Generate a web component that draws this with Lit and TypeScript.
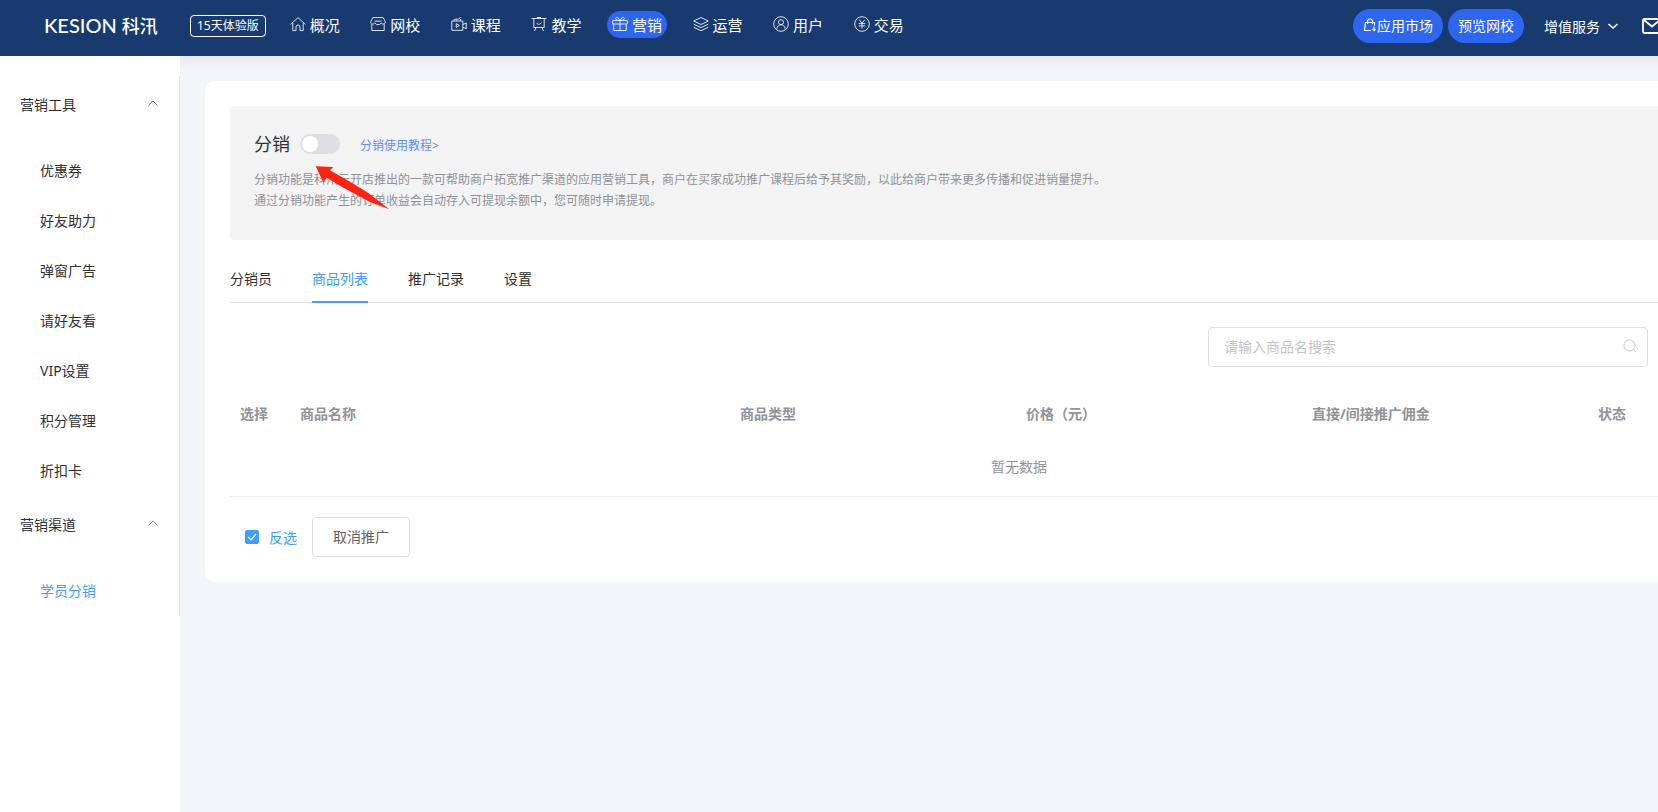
import { LitElement, html, css, svg } from "lit";
import { customElement, state } from "lit/decorators.js";

const icons: Record<string, unknown> = {
  home: svg`<path d="M.6 8.400 8 1.600l7.400 6.800M2.800 7v7.600h3.200V11a2 2 0 0 1 4 0v3.600h3.200V7"/>`,
  shop: svg`<path d="M2.800 1.600h10.400l2 4v1.500c-1.200 1.300-3 1.300-4 0L9.500 8.500h-3L5 7.100H4.600c-1 1.300-2.800 1.300-3.800 0V5.600zM1.800 8.200v6.300h12.400V8.200M4.500 5.100h7"/>`,
  course: svg`<path d="M.8 5h11v9.300H.8zM11.800 8.500 15.300 7v5.700l-3.500-1.500M3.200 5V3M6 4.800 4.500 3.200h3L9.500 1.200M9.500 4.800V3"/><path d="M5.200 7.600v3.800l3.200-1.900z"/>`,
  teach: svg`<path d="M.5 2.500h15M2.800 2.500v9h10.400v-9M5 11.500 3.500 15M11 11.500l1.500 3.500M6 1.500h4M5.400 7c1.500 2 3.500 1.500 5-.5"/>`,
  gift: svg`<path d="M.7 4.500h14.600V8H.7zM1.700 8v6.500h12.600V8M8 4.500v10M8 4.500C6.500 1 3.500.8 3.600 2.700 3.700 4.200 6 4.500 8 4.500c2 0 4.300-.3 4.400-1.800C12.500.8 9.500 1 8 4.500z"/>`,
  layers: svg`<path d="M8 1.500 15.300 5 8 8.500.7 5zM.7 8.200 8 11.600l7.300-3.400M.7 11.300 8 14.700l7.300-3.400"/>`,
  user: svg`<circle cx="8" cy="8" r="7.300"/><circle cx="8" cy="6.200" r="2.500"/><path d="M3.800 12.700c.5-5.200 7.900-5.200 8.400 0"/>`,
  yen: svg`<circle cx="8" cy="8" r="7.300"/><path d="M5.200 3.800 8 7.200l2.800-3.400M8 7.200v5.300M4.800 7.600h6.400M4.800 9.900h6.400"/>`,
};

const navItems = [
  ["home", "概况"],
  ["shop", "网校"],
  ["course", "课程"],
  ["teach", "教学"],
  ["gift", "营销"],
  ["layers", "运营"],
  ["user", "用户"],
  ["yen", "交易"],
];

const groups = [
  {
    title: "营销工具",
    items: ["优惠券", "好友助力", "弹窗广告", "请好友看", "VIP设置", "积分管理", "折扣卡"],
  },
  { title: "营销渠道", items: ["学员分销"] },
];

const tabs = ["分销员", "商品列表", "推广记录", "设置"];

const base = css`
  * {
    box-sizing: border-box;
  }
  a {
    color: inherit;
    text-decoration: none;
  }
  button {
    font: inherit;
    color: inherit;
    margin: 0;
    cursor: pointer;
  }
  svg {
    display: block;
    flex: none;
    fill: none;
    stroke: currentColor;
  }
`;

@customElement("top-bar")
export class TopBar extends LitElement {
  static styles = [
    base,
    css`
      :host {
        display: flex;
        align-items: center;
        height: 56px;
        padding: 0 25px 0 44px;
        background: #183a6f;
        color: #fff;
        box-shadow: 0 2px 16px rgba(0, 0, 0, 0.08);
      }
      .logo {
        display: flex;
        align-items: center;
        gap: 5px;
        width: 146px;
        height: 48px;
        margin-bottom: 7px;
        font: 500 20px/48px Lato, sans-serif;
      }
      .logo-cn {
        font: 500 18px/48px "Noto Sans CJK SC", sans-serif;
      }
      .badge {
        height: 22px;
        padding: 0 6px;
        border: 1px solid #fff;
        border-radius: 4px;
        font-size: 12px;
        line-height: 20px;
        margin: 0 19px 4px 0;
      }
      nav {
        display: flex;
        justify-content: space-between;
        width: 624px;
        margin-bottom: 8px;
      }
      .item {
        display: flex;
        align-items: center;
        gap: 4px;
        height: 27px;
        padding: 0 5px;
        border-radius: 14px;
        font-size: 15px;
      }
      .item svg {
        opacity: 0.85;
      }
      .item.active,
      .pill {
        background: #2e66ef;
      }
      .tools {
        display: flex;
        align-items: center;
        gap: 5px;
        margin: 0 0 4px auto;
        font-size: 14px;
      }
      .pill {
        display: flex;
        align-items: center;
        height: 34px;
        padding: 0 10px 2px;
        border: 0;
        border-radius: 17px;
      }
      .service {
        display: flex;
        align-items: center;
        gap: 6px;
        padding: 0 17px 0 15px;
        border: 0;
        background: none;
      }
      .mail {
        padding: 0;
        border: 0;
        background: none;
      }
      .tail {
        width: 166px;
      }
    `,
  ];

  render() {
    return html`
      <a class="logo" href="#"><span>KESION</span><span class="logo-cn">科汛</span></a>
      <span class="badge">15天体验版</span>
      <nav>
        ${navItems.map(
          ([icon, label]) => html`<a class="item ${icon === "gift" ? "active" : ""}" href="#">
            <svg width="16" height="16" viewBox="0 0 16 16">${icons[icon]}</svg>${label}
          </a>`
        )}
      </nav>
      <div class="tools">
        <button class="pill">
          <svg width="14" height="14" viewBox="0 0 14 14" stroke-width="1.2">
            <path d="M11.500 7.500V4.500H2.500L1.500 12.500H8M4.500 6V3.500a2.500 2.500 0 0 1 5 0V6M11 8.500v4M9.500 11l1.500 1.700 1.500-1.700" />
          </svg>应用市场
        </button>
        <button class="pill">预览网校</button>
        <button class="service">
          增值服务
          <svg width="14" height="14" viewBox="0 0 14 14" stroke-width="1.600">
            <path d="M2.500 5 7 9l4.500-4" />
          </svg>
        </button>
        <button class="mail" aria-label="消息">
          <svg width="20" height="16" viewBox="0 0 20 16" stroke-width="1.800">
            <rect x="1" y="1" width="18" height="14" rx="1.500" />
            <path d="m2 2 8 6.500L18 2" />
          </svg>
        </button>
        <span class="tail"></span>
      </div>
    `;
  }
}

@customElement("side-menu")
export class SideMenu extends LitElement {
  static styles = [
    base,
    css`
      :host {
        display: block;
        flex: none;
        width: 180px;
        padding-top: 20px;
        background: #fff;
        color: #303133;
        font-size: 14px;
        position: relative;
      }
      .menu {
        border-right: 1px solid #e3e4e8;
      }
      .title {
        display: flex;
        align-items: center;
        justify-content: space-between;
        width: 100%;
        height: 60px;
        padding: 0 20px 4px;
        border: 0;
        background: none;
      }
      .title svg {
        color: #909399;
        margin-bottom: 2px;
      }
      .items {
        margin: 0;
        padding: 10px 0 0;
        list-style: none;
      }
      .link {
        display: block;
        padding-left: 40px;
        line-height: 50px;
      }
      .link.active {
        color: #409eff;
      }
    `,
  ];

  render() {
    return html`<nav class="menu">
      ${groups.map(
        (g) => html`<button class="title">
            ${g.title}
            <svg width="12" height="12" viewBox="0 0 12 12"><path d="M1.500 8.500 6 4l4.500 4.500" /></svg>
          </button>
          <ul class="items">
            ${g.items.map(
              (t) => html`<li><a class="link ${t === "学员分销" ? "active" : ""}" href="#">${t}</a></li>`
            )}
          </ul>`
      )}
    </nav>`;
  }
}

@customElement("app-root")
export class AppRoot extends LitElement {
  @state() private tab = "商品列表";

  static styles = [
    base,
    css`
      :host {
        display: block;
        overflow: hidden;
        font-family: "Noto Sans", "Noto Sans CJK SC", sans-serif;
        font-size: 14px;
        color: #303133;
      }
      .page {
        display: flex;
        flex-direction: column;
        min-width: 1858px;
        min-height: 100vh;
        background: #f4f5fa;
      }
      .body {
        display: flex;
        flex: 1;
      }
      .main {
        flex: 1;
        padding: 25px;
      }
      .card {
        padding: 25px;
        border-radius: 10px;
        background: #fff;
      }
      .intro {
        position: relative;
        padding: 24px 24px 29px;
        border-radius: 4px;
        background: #f3f3f3;
      }
      .intro-head {
        display: flex;
        align-items: center;
        height: 28px;
        margin-bottom: 11px;
      }
      h1 {
        margin: 0 10px 0 0;
        padding-bottom: 2px;
        font-size: 18px;
        font-weight: 400;
      }
      .switch {
        appearance: none;
        display: flex;
        width: 40px;
        height: 20px;
        margin: 0 20px 0 0;
        padding: 2px;
        border-radius: 10px;
        background: #dcdfe6;
      }
      .switch::before {
        content: "";
        width: 16px;
        height: 16px;
        border-radius: 50%;
        background: #fff;
      }
      .switch:checked {
        justify-content: flex-end;
        background: #409eff;
      }
      .guide {
        padding-top: 2px;
        color: #5e8ff0;
        font-size: 12px;
      }
      .desc {
        margin: 0;
        color: #8f9299;
        font-size: 12px;
        line-height: 21px;
      }
      .arrow {
        position: absolute;
        left: 84px;
        top: 58px;
        fill: #fe2414;
        stroke: none;
      }
      .tabs {
        display: flex;
        gap: 40px;
        margin: 19px 0 24px;
        border-bottom: 1px solid #e4e7ed;
      }
      .tab {
        margin-bottom: -1px;
        padding: 0 0 2px;
        border: 0;
        border-bottom: 2px solid transparent;
        background: none;
        line-height: 40px;
      }
      .tab.active {
        color: #409eff;
        border-color: #409eff;
      }
      .search {
        display: flex;
        align-items: center;
        width: 440px;
        height: 40px;
        margin: 0 160px 23px auto;
        padding: 0 10px 2px 15px;
        border: 1px solid #dcdfe6;
        border-radius: 4px;
        color: #c0c4cc;
      }
      .search input {
        flex: 1;
        min-width: 0;
        padding: 0;
        border: 0;
        outline: 0;
        background: none;
        color: #606266;
        font: inherit;
      }
      .search input::placeholder {
        color: #c0c4cc;
      }
      table {
        width: 100%;
        border-collapse: collapse;
        table-layout: fixed;
        color: #909399;
      }
      th {
        height: 46px;
        padding: 0 10px;
        text-align: left;
        font-weight: 700;
      }
      td {
        height: 60px;
        padding: 0;
        border-bottom: 1px solid #ebeef5;
        text-align: center;
      }
      .c-pick {
        width: 60px;
      }
      .c-name {
        width: 440px;
      }
      .c-mid {
        width: 286px;
      }
      .actions {
        display: flex;
        align-items: center;
        gap: 15px;
        padding: 20px 0 0 15px;
      }
      .check {
        display: flex;
        align-items: center;
        gap: 10px;
        color: #409eff;
      }
      .check input {
        appearance: none;
        width: 14px;
        height: 14px;
        margin: 0;
        border: 1px solid #409eff;
        border-radius: 2px;
      }
      .check input:checked {
        background: #409eff
          url("data:image/svg+xml,%3Csvg xmlns='http://www.w3.org/2000/svg' viewBox='0 0 12 12'%3E%3Cpath d='M2 6 5 8.800 10 3' fill='none' stroke='white' stroke-width='1.200'/%3E%3C/svg%3E");
      }
      .cancel {
        height: 40px;
        padding: 0 20px 2px;
        border: 1px solid #dcdfe6;
        border-radius: 4px;
        background: #fff;
        color: #606266;
      }
    `,
  ];

  render() {
    return html`<div class="page">
      <top-bar></top-bar>
      <div class="body">
        <side-menu></side-menu>
        <main class="main">
          <div class="card">
            <section class="intro">
              <div class="intro-head">
                <h1><label for="enable">分销</label></h1>
                <input class="switch" id="enable" type="checkbox" role="switch" />
                <a class="guide" href="#">分销使用教程&gt;</a>
              </div>
              <p class="desc">
                分销功能是科汛云开店推出的一款可帮助商户拓宽推广渠道的应用营销工具，商户在买家成功推广课程后给予其奖励，以此给商户带来更多传播和促进销量提升。<br />通过分销功能产生的订单收益会自动存入可提现余额中，您可随时申请提现。
              </p>
              <svg class="arrow" width="76" height="48" viewBox="0 0 76 48">
                <path d="M1.700 2.300 19.300 3 16 6.300 37.700 18.800 54 28.800 75.300 45.300 56 38 29 23.500 12.700 13.800 9.300 18.300z" />
              </svg>
            </section>
            <div class="tabs" role="tablist">
              ${tabs.map(
                (t) => html`<button
                  class="tab ${t === this.tab ? "active" : ""}"
                  role="tab"
                  aria-selected=${t === this.tab}
                  @click=${() => (this.tab = t)}
                >${t}</button>`
              )}
            </div>
            <div class="search">
              <input type="text" aria-label="商品名" placeholder="请输入商品名搜索" />
              <svg width="14" height="14" viewBox="0 0 14 14">
                <circle cx="6.500" cy="6.500" r="5.600" /><path d="m10.800 10.800 2 2" />
              </svg>
            </div>
            <table>
              <thead>
                <tr>
                  <th class="c-pick">选择</th>
                  <th class="c-name">商品名称</th>
                  <th class="c-mid">商品类型</th>
                  <th class="c-mid">价格（元）</th>
                  <th class="c-mid">直接/间接推广佣金</th>
                  <th>状态</th>
                </tr>
              </thead>
              <tbody>
                <tr>
                  <td colspan="6">暂无数据</td>
                </tr>
              </tbody>
            </table>
            <div class="actions">
              <label class="check"><input type="checkbox" checked />反选</label>
              <button class="cancel">取消推广</button>
            </div>
          </div>
        </main>
      </div>
    </div>`;
  }
}
